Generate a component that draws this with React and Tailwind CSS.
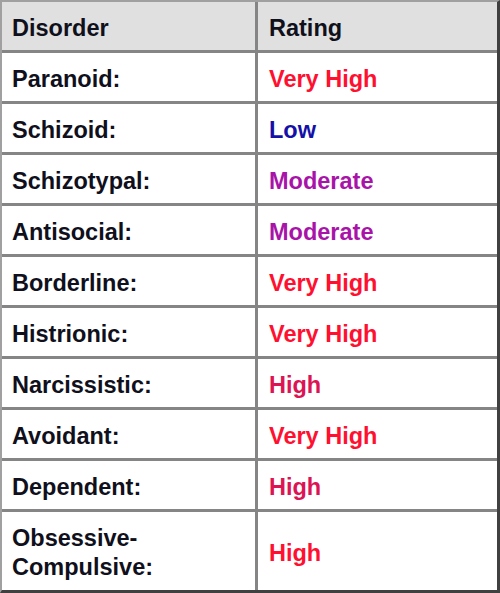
const rows = [
  { name: "Paranoid:", rating: "Very High", color: "text-[#ff1030]" },
  { name: "Schizoid:", rating: "Low", color: "text-[#1410a8]" },
  { name: "Schizotypal:", rating: "Moderate", color: "text-[#a814a8]" },
  { name: "Antisocial:", rating: "Moderate", color: "text-[#a814a8]" },
  { name: "Borderline:", rating: "Very High", color: "text-[#ff1030]" },
  { name: "Histrionic:", rating: "Very High", color: "text-[#ff1030]" },
  { name: "Narcissistic:", rating: "High", color: "text-[#dc1454]" },
  { name: "Avoidant:", rating: "Very High", color: "text-[#ff1030]" },
  { name: "Dependent:", rating: "High", color: "text-[#dc1454]" },
];

export default function App() {
  return (
    <div className="w-[500px] h-[593px] bg-white font-['Liberation_Sans',Arial,sans-serif] font-bold text-[23.5px] text-[#10101c]">
      <div className="grid grid-cols-[253px_239px] grid-rows-[48px_repeat(9,48px)_78px] gap-[3px] bg-[#858585] border-t-2 border-l-2 border-r-[3px] border-b-[3px] border-t-[#a0a0a0] border-l-[#a0a0a0] border-r-[#404040] border-b-[#404040]">
        <div className="bg-[#e0e0e0] flex items-center pl-[10px] pt-[5px]">Disorder</div>
        <div className="bg-[#e0e0e0] flex items-center pl-[11px] pt-[5px]">Rating</div>
        {rows.map((r) => (
          <div key={r.name} className="contents">
            <div className="bg-white flex items-center pl-[10px] pt-[5px]">{r.name}</div>
            <div className={`bg-white flex items-center pl-[11px] pt-[5px] ${r.color}`}>
              {r.rating}
            </div>
          </div>
        ))}
        <div className="bg-white flex items-center pl-[10px] pt-[4px] leading-[29px]">
          Obsessive-
          <br />
          Compulsive:
        </div>
        <div className="bg-white flex items-center pl-[11px] pt-[5px] text-[#ff1030]">High</div>
      </div>
    </div>
  );
}
